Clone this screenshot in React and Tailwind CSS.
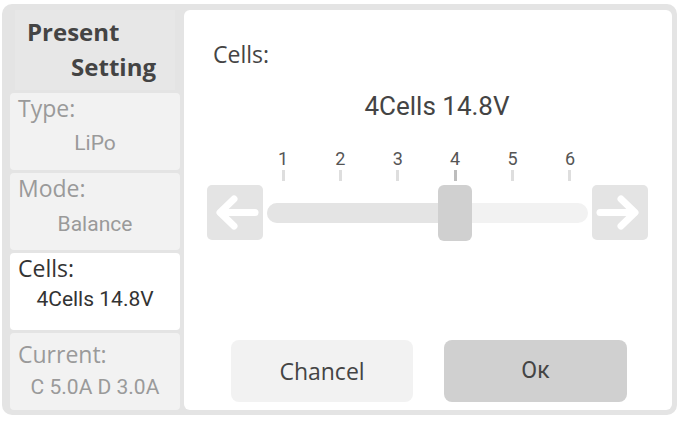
import React from 'react';

const OPEN = { fontFamily: '"Open Sans", "Liberation Sans", sans-serif' };
const DIGI = { fontFamily: 'Roboto, "Liberation Sans", sans-serif' };

const items = [
  { label: 'Type:', value: 'LiPo', pt: 'pt-[1px]', mt: 'mt-[9px]', active: false },
  { label: 'Mode:', value: 'Balance', pt: 'pt-[1px]', mt: 'mt-[10px]', active: false },
  { label: 'Cells:', value: '4Cells 14.8V', pt: 'pt-[1px]', mt: 'mt-[5px]', active: true },
  { label: 'Current:', value: 'C 5.0A D 3.0A', pt: 'pt-[7px]', mt: 'mt-[7px]', active: false },
];

function Arrow({ dir }) {
  const left = dir === 'left';
  return (
    <div className="w-[56px] h-[55px] rounded-[5px] bg-[#e4e4e4] flex items-center justify-center shrink-0">
      <svg width="56" height="55" viewBox="0 0 56 55" fill="none" stroke="#ffffff" strokeWidth="7" strokeLinecap="round" strokeLinejoin="round">
        {left ? (
          <>
            <path d="M48 27.5H14" />
            <path d="M27 14L13 27.5L27 41" />
          </>
        ) : (
          <>
            <path d="M8 27.5H42" />
            <path d="M29 14L43 27.5L29 41" />
          </>
        )}
      </svg>
    </div>
  );
}

export default function App() {
  const ticks = [1, 2, 3, 4, 5, 6];
  return (
    <div className="w-[678px] h-[422px] bg-white pt-[4px] pl-[2px]">
      <div className="w-[675px] h-[411px] bg-[#e4e4e4] rounded-[10px] flex gap-[4px] pt-[6px] pl-[8px] pr-[5px] pb-[5px]">
        {/* Sidebar */}
        <div className="w-[170px] flex flex-col gap-[3px]">
          <div className="h-[80px] mx-[5px] bg-[#e7e7e7] pt-[4px] text-[24px] leading-[35px] font-bold text-[#444]" style={OPEN}>
            <div className="pl-[12px]">Present</div>
            <div className="text-right pr-[19px]">Setting</div>
          </div>
          {items.map((it) => (
            <div
              key={it.label}
              className={`h-[77px] rounded-[4px] ${it.pt} ${it.active ? 'bg-white' : 'bg-[#f2f2f2]'}`}
            >
              <div
                className={`pl-[8px] text-[23px] leading-[28px] ${it.active ? 'text-[#333]' : 'text-[#9a9a9a]'}`}
                style={OPEN}
              >
                {it.label}
              </div>
              <div
                className={`${it.mt} text-center text-[21px] leading-[24px] ${it.active ? 'text-[#333]' : 'text-[#9a9a9a]'}`}
                style={DIGI}
              >
                {it.value}
              </div>
            </div>
          ))}
        </div>

        {/* Main panel */}
        <div className="flex-1 bg-white rounded-[6px] flex flex-col pt-[30px] pb-[8px]">
          <div className="pl-[29px] text-[23px] leading-[28px] text-[#444]" style={OPEN}>
            Cells:
          </div>
          <div className="mt-[23px] pl-[18px] text-center text-[26px] leading-[30px] text-[#444]" style={DIGI}>
            4Cells 14.8V
          </div>

          <div className="ml-[23px] mt-[28px]">
            <div className="ml-[60px] w-[321px] flex justify-between pl-[16px] pr-[18px]">
              {ticks.map((t) => (
                <div key={t} className="w-0 flex flex-col items-center">
                  <span className="text-[18px] leading-[20px] text-[#555]" style={DIGI}>
                    {t}
                  </span>
                  <span className={`mt-[1px] w-[3px] h-[11px] shrink-0 ${t === 4 ? 'bg-[#bdbdbd]' : 'bg-[#dedede]'}`} />
                </div>
              ))}
            </div>

            <div className="mt-[4px] flex items-center gap-[4px] h-[55px]">
              <Arrow dir="left" />
              <div className="relative w-[321px] h-[20px] rounded-full bg-[#f2f2f2]">
                <div className="absolute left-0 top-0 h-[20px] w-[188px] rounded-l-full bg-[#e4e4e4]" />
                <div className="absolute left-[171px] top-[-18px] w-[34px] h-[56px] rounded-[6px] bg-[#d0d0d0]" />
              </div>
              <Arrow dir="right" />
            </div>
          </div>

          <div className="mt-auto flex justify-center gap-[31px] pl-[2px]">
            <button className="w-[182px] h-[62px] rounded-[8px] bg-[#f2f2f2] text-[23px] text-[#444]" style={OPEN}>
              Chancel
            </button>
            <button className="w-[183px] h-[62px] rounded-[8px] bg-[#d0d0d0] text-[23px] font-normal text-[#444]" style={DIGI}>
              Oк
            </button>
          </div>
        </div>
      </div>
    </div>
  );
}
